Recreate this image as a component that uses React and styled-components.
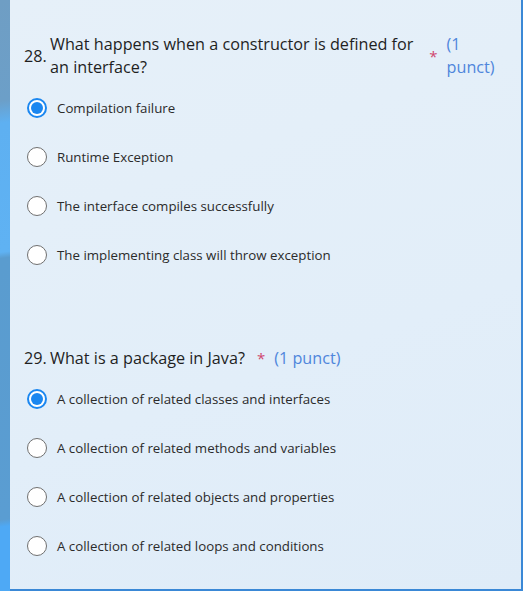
import React from "react";
import styled, { createGlobalStyle } from "styled-components";

const Global = createGlobalStyle`
  html, body { margin: 0; padding: 0; }
  body {
    width: 523px;
    height: 591px;
    overflow: hidden;
    background: linear-gradient(172deg,
      #6f9ec4 0px, #6c9fc8 100px, #5eb0f1 122px, #5fb2f3 250px,
      #5a9ccf 256px, #5a9dd2 515px, #4ea9f5 522px, #4ea9f5 591px);
  }
`;

const Card = styled.main`
  box-sizing: border-box;
  width: 513px;
  height: 591px;
  margin-left: 10px;
  padding: 33px 22px 0 14px;
  background: linear-gradient(160deg, #e6f0f9 0%, #e2eef9 60%, #dfecf8 100%);
  border-right: 2px solid #3a88d6;
  border-bottom: 2px solid #3a88d6;
  font-family: "Open Sans", "Noto Sans", sans-serif;
`;

const Question = styled.section`
  margin-bottom: 68px;
`;

const Header = styled.div`
  display: flex;
  align-items: center;
  font-size: 16.2px;
  line-height: 23px;
  color: #1f1f1f;
`;

const Number = styled.span`
  flex: none;
  width: 26px;
`;

const Title = styled.span`
  flex: 0 1 auto;
  min-width: 0;
`;

const Required = styled.span`
  flex: none;
  margin: 0 9px 0 12px;
  color: #d0466e;
  font-size: 15px;
`;

const Points = styled.span`
  flex: 0 1 auto;
  min-width: 0;
  color: #4f86dc;
`;

const Options = styled.ul`
  list-style: none;
  margin: 4px 0 0;
  padding: 0;
`;

const Option = styled.li`
  display: flex;
  align-items: center;
  height: 49px;
  padding-left: 3px;
`;

const Radio = styled.span`
  box-sizing: border-box;
  flex: none;
  width: 20px;
  height: 20px;
  border-radius: 50%;
  background: #fff;
  border: ${(p) => (p.$checked ? "2px solid #1b87f0" : "1px solid #707070")};
  display: flex;
  align-items: center;
  justify-content: center;
  &::after {
    content: "";
    display: ${(p) => (p.$checked ? "block" : "none")};
    width: 12px;
    height: 12px;
    border-radius: 50%;
    background: #1b87f0;
  }
`;

const Label = styled.span`
  margin-left: 10px;
  font-size: 13.3px;
  color: #2b2b2b;
`;

const questions = [
  {
    n: "28.",
    title: "What happens when a constructor is defined for an interface?",
    options: [
      "Compilation failure",
      "Runtime Exception",
      "The interface compiles successfully",
      "The implementing class will throw exception",
    ],
    checked: 0,
  },
  {
    n: "29.",
    title: "What is a package in Java?",
    options: [
      "A collection of related classes and interfaces",
      "A collection of related methods and variables",
      "A collection of related objects and properties",
      "A collection of related loops and conditions",
    ],
    checked: 0,
  },
];

export default function App() {
  return (
    <>
      <Global />
      <Card>
        {questions.map((q) => (
          <Question key={q.n}>
            <Header>
              <Number>{q.n}</Number>
              <Title>{q.title}</Title>
              <Required>*</Required>
              <Points>(1 punct)</Points>
            </Header>
            <Options>
              {q.options.map((o, i) => (
                <Option key={o}>
                  <Radio $checked={i === q.checked} />
                  <Label>{o}</Label>
                </Option>
              ))}
            </Options>
          </Question>
        ))}
      </Card>
    </>
  );
}
